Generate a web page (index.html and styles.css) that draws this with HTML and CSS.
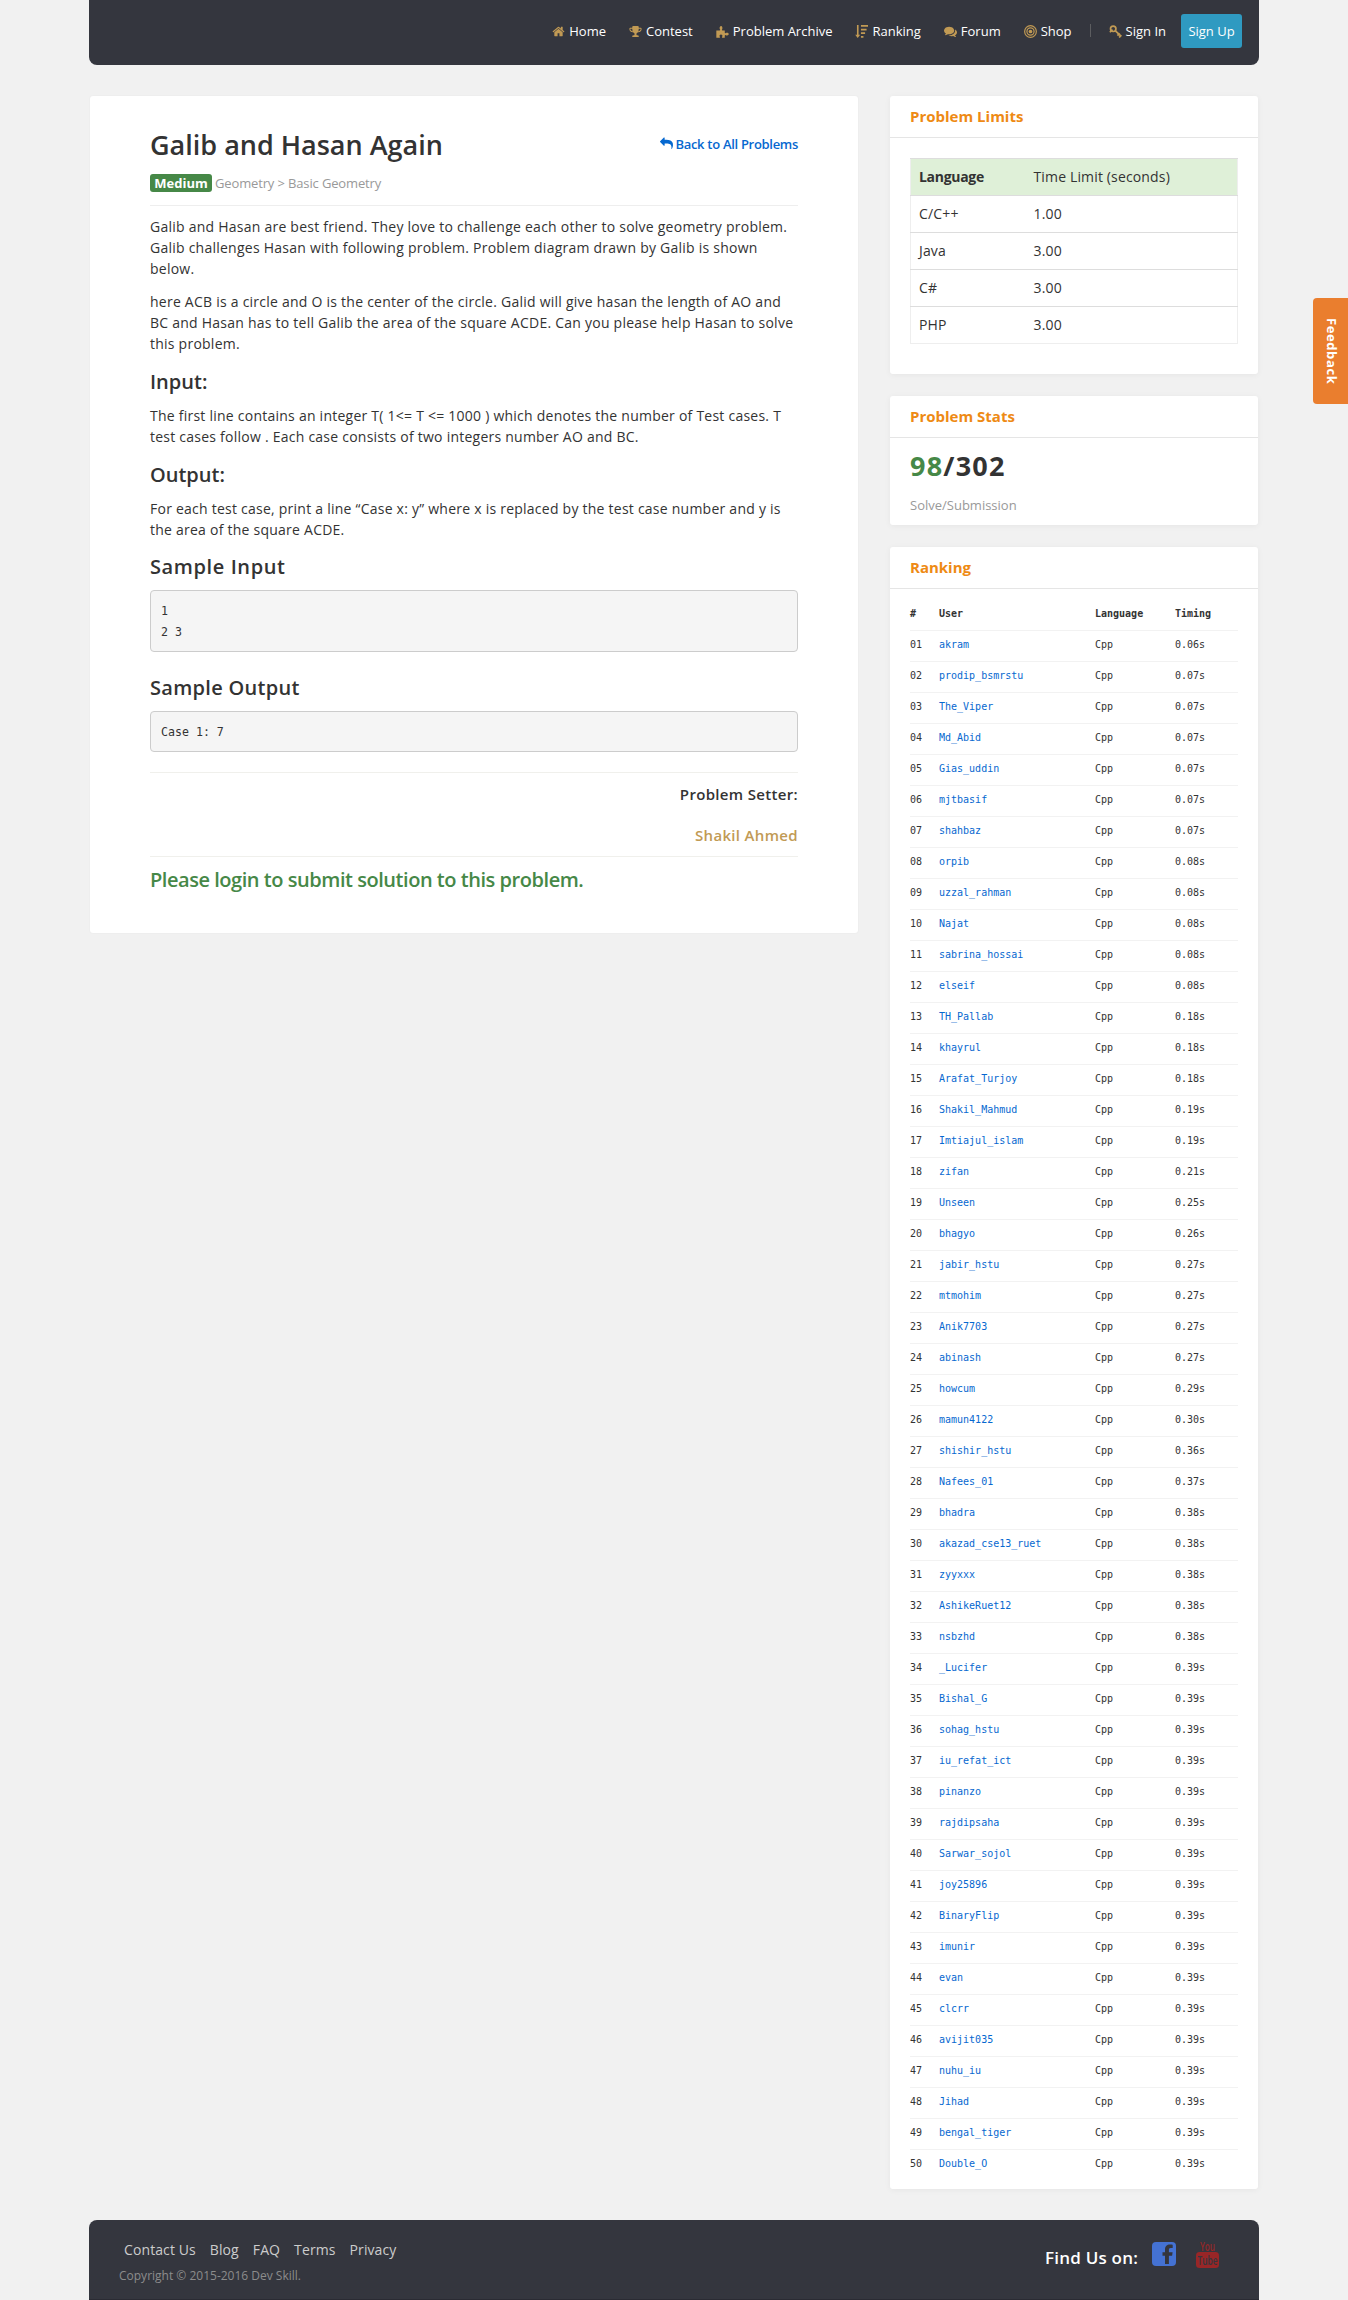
FILE: index.html
```html
<!DOCTYPE html>
<html lang="en">
<head>
<meta charset="utf-8">
<title>Galib and Hasan Again - Dev Skill</title>
<link rel="stylesheet" href="styles.css">
</head>
<body>
<div class="container">
  <header class="topbar">
    <nav class="nav">
      <a class="nav-item"><svg class="icon" viewBox="0 0 1792 1792"><path d="M1472 992v480q0 26-19 45t-45 19h-384v-384h-256v384h-384q-26 0-45-19t-19-45v-480q0-1 .5-3t.5-3l575-474 575 474q1 2 1 6zm223-69l-62 74q-8 9-21 11h-3q-13 0-21-7l-692-577-692 577q-12 8-24 7-13-2-21-11l-62-74q-8-10-7-23.5t11-21.5l719-599q32-26 76-26t76 26l244 204v-195q0-14 9-23t23-9h192q14 0 23 9t9 23v408l219 182q10 8 11 21.5t-7 23.5z"/></svg>Home</a>
      <a class="nav-item"><svg class="icon" viewBox="0 0 1792 1792"><path d="M522 883q-74-162-74-371h-256v96q0 78 94.500 162t235.500 113zm1078-275v-96h-256q0 209-74 371 141-29 235.500-113t94.500-162zm128-128v128q0 71-41.500 143t-112 130-173 97.500-215.500 44.500q-42 54-95 95-38 34-52.500 72.500t-14.500 89.500q0 54 30.500 91t97.500 37q75 0 133.500 45.500t58.500 114.500v64q0 14-9 23t-23 9h-832q-14 0-23-9t-9-23v-64q0-69 58.500-114.500t133.500-45.500q67 0 97.500-37t30.500-91q0-51-14.500-89.500t-52.500-72.500q-53-41-95-95-113-5-215.500-44.500t-173-97.500-112-130-41.500-143v-128q0-40 28-68t68-28h288v-96q0-66 47-113t113-47h576q66 0 113 47t47 113v96h288q40 0 68 28t28 68z"/></svg>Contest</a>
      <a class="nav-item"><svg class="icon" viewBox="0 0 12 12"><path d="M.3 5h3.100c.5 0 .6-.4.300-.8C3 3.300 3.300 1 4.600 1s1.700 2.100 1 3.200c-.3.400-.2.800.4.800h2.100v2c0 .6.400.7.900.400 1.300-.7 2.700-.3 2.700 1s-1.400 1.700-2.700 1c-.5-.3-.9-.1-.9.500v1.800H6c-.5 0-.6-.4-.3-.9.700-1-.1-2-1.100-2s-1.800 1-1.100 2c.3.500.2.900-.3.900H.3z"/></svg>Problem Archive</a>
      <a class="nav-item"><svg class="icon" viewBox="0 0 12 12"><path d="M1.800 0h1.500v9h1.500L2.500 12 .2 9h1.600zM5.500 0H12v1.700H5.500zM5.500 3.400h5.200V5H5.500zM5.500 6.800h3.800v1.600H5.500zM5.500 10.200h2.300v1.600H5.500z"/></svg>Ranking</a>
      <a class="nav-item"><svg class="icon" viewBox="0 0 1792 1792"><path d="M1408 768q0 139-94 257t-256.500 186.500-353.500 68.500q-86 0-176-16-124 88-278 128-36 9-86 16h-3q-11 0-20.500-8t-11.500-21q-1-3-1-6.500t.5-6.500 2-6l2.500-5t3.500-5.500 4-5 4.500-5 4-4.500q5-6 23-25t26-29.500 22.500-29 25-38.500 20.500-44q-124-72-195-177t-71-224q0-139 94-257t256.500-186.500 353.500-68.500 353.500 68.500 256.500 186.500 94 257zm384 256q0 120-71 224.500t-195 176.500q10 24 20.500 44t25 38.500 22.500 29 26 29.500 23 25q1 1 4 4.500t4.500 5 4 5 3.500 5.500l2.500 5t2 6 .5 6.500-1 6.500q-3 14-13 22t-22 7q-50-7-86-16-154-40-278-128-90 16-176 16-271 0-472-132 58 4 88 4 161 0 309-45t264-129q125-92 192-212t67-254q0-77-23-152 129 71 204 178t75 230z"/></svg>Forum</a>
      <a class="nav-item"><svg class="icon" viewBox="0 0 12 12"><g fill="none" stroke="#c19a54" stroke-width="1.100"><circle cx="6" cy="6" r="5.400"/><circle cx="6" cy="6" r="3.300"/></g><circle cx="6" cy="6" r="1.700"/></svg>Shop</a>
      <span class="divider"></span>
      <a class="nav-item"><svg class="icon" viewBox="0 0 12 12"><g fill="none" stroke="#c19a54" stroke-width="1.600"><circle cx="3.900" cy="3.500" r="2.500"/><path d="M.8 6.700l2.500-2.500M5.700 5.300l5.600 5.300M7.800 9.800l2-2.200M9.400 11.500l2-2.200"/></g></svg>Sign In</a>
      <a class="signup">Sign Up</a>
    </nav>
  </header>

  <div class="columns">
    <main class="problem">
      <div class="title-row">
        <h1>Galib and Hasan Again</h1>
        <a class="back"><svg class="reply" viewBox="0 0 1792 1792"><path transform="matrix(-1 0 0 1 1792 0)" d="M1792 640q0 26-19 45l-512 512q-19 19-45 19t-45-19-19-45v-256h-224q-98 0-175.500 6t-154 21.500-133 42.500-105.500 69.500-80 101-48.500 138.500-17.500 181q0 55 5 123 0 6 2.500 23.500t2.500 26.500q0 15-8.500 25t-23.500 10q-16 0-28-17-7-9-13-22t-13.500-30-10.500-24q-127-285-127-451 0-199 53-333 162-403 875-403h224v-256q0-26 19-45t45-19 45 19l512 512q19 19 19 45z"/></svg><span>Back to All Problems</span></a>
      </div>
      <div class="meta"><span class="badge">Medium</span><span class="crumbs">Geometry &gt; Basic Geometry</span></div>
      <p>Galib and Hasan are best friend. They love to challenge each other to solve geometry problem.<br>Galib challenges Hasan with following problem. Problem diagram drawn by Galib is shown<br>below.</p>
      <p>here ACB is a circle and O is the center of the circle. Galid will give hasan the length of AO and<br>BC and Hasan has to tell Galib the area of the square ACDE. Can you please help Hasan to solve<br>this problem.</p>
      <h2>Input:</h2>
      <p>The first line contains an integer T( 1&lt;= T &lt;= 1000 ) which denotes the number of Test cases. T<br>test cases follow . Each case consists of two integers number AO and BC.</p>
      <h2>Output:</h2>
      <p>For each test case, print a line “Case x: y” where x is replaced by the test case number and y is<br>the area of the square ACDE.</p>
      <h2 class="sample">Sample Input</h2>
      <pre>1
2 3</pre>
      <h2 class="sample-out">Sample Output</h2>
      <pre>Case 1: 7</pre>
      <section class="setter">
        <h3>Problem Setter:</h3>
        <h3 class="name">Shakil Ahmed</h3>
      </section>
      <h2 class="login">Please login to submit solution to this problem.</h2>
    </main>

    <aside class="side">
      <section class="card limits">
        <h3 class="card-title">Problem Limits</h3>
        <table>
          <tr><th>Language</th><td>Time Limit (seconds)</td></tr>
          <tr><td>C/C++</td><td>1.00</td></tr>
          <tr><td>Java</td><td>3.00</td></tr>
          <tr><td>C#</td><td>3.00</td></tr>
          <tr><td>PHP</td><td>3.00</td></tr>
        </table>
      </section>
      <section class="card stats">
        <h3 class="card-title">Problem Stats</h3>
        <div class="score"><span>98</span>/302</div>
        <div class="caption">Solve/Submission</div>
      </section>
      <section class="card ranks">
        <h3 class="card-title">Ranking</h3>
        <table>
          <colgroup><col class="c-no"><col class="c-user"><col class="c-lang"><col></colgroup>
          <tr><th>#</th><th>User</th><th>Language</th><th>Timing</th></tr>
          <tr><td>01</td><td><a>akram</a></td><td>Cpp</td><td>0.06s</td></tr>
          <tr><td>02</td><td><a>prodip_bsmrstu</a></td><td>Cpp</td><td>0.07s</td></tr>
          <tr><td>03</td><td><a>The_Viper</a></td><td>Cpp</td><td>0.07s</td></tr>
          <tr><td>04</td><td><a>Md_Abid</a></td><td>Cpp</td><td>0.07s</td></tr>
          <tr><td>05</td><td><a>Gias_uddin</a></td><td>Cpp</td><td>0.07s</td></tr>
          <tr><td>06</td><td><a>mjtbasif</a></td><td>Cpp</td><td>0.07s</td></tr>
          <tr><td>07</td><td><a>shahbaz</a></td><td>Cpp</td><td>0.07s</td></tr>
          <tr><td>08</td><td><a>orpib</a></td><td>Cpp</td><td>0.08s</td></tr>
          <tr><td>09</td><td><a>uzzal_rahman</a></td><td>Cpp</td><td>0.08s</td></tr>
          <tr><td>10</td><td><a>Najat</a></td><td>Cpp</td><td>0.08s</td></tr>
          <tr><td>11</td><td><a>sabrina_hossai</a></td><td>Cpp</td><td>0.08s</td></tr>
          <tr><td>12</td><td><a>elseif</a></td><td>Cpp</td><td>0.08s</td></tr>
          <tr><td>13</td><td><a>TH_Pallab</a></td><td>Cpp</td><td>0.18s</td></tr>
          <tr><td>14</td><td><a>khayrul</a></td><td>Cpp</td><td>0.18s</td></tr>
          <tr><td>15</td><td><a>Arafat_Turjoy</a></td><td>Cpp</td><td>0.18s</td></tr>
          <tr><td>16</td><td><a>Shakil_Mahmud</a></td><td>Cpp</td><td>0.19s</td></tr>
          <tr><td>17</td><td><a>Imtiajul_islam</a></td><td>Cpp</td><td>0.19s</td></tr>
          <tr><td>18</td><td><a>zifan</a></td><td>Cpp</td><td>0.21s</td></tr>
          <tr><td>19</td><td><a>Unseen</a></td><td>Cpp</td><td>0.25s</td></tr>
          <tr><td>20</td><td><a>bhagyo</a></td><td>Cpp</td><td>0.26s</td></tr>
          <tr><td>21</td><td><a>jabir_hstu</a></td><td>Cpp</td><td>0.27s</td></tr>
          <tr><td>22</td><td><a>mtmohim</a></td><td>Cpp</td><td>0.27s</td></tr>
          <tr><td>23</td><td><a>Anik7703</a></td><td>Cpp</td><td>0.27s</td></tr>
          <tr><td>24</td><td><a>abinash</a></td><td>Cpp</td><td>0.27s</td></tr>
          <tr><td>25</td><td><a>howcum</a></td><td>Cpp</td><td>0.29s</td></tr>
          <tr><td>26</td><td><a>mamun4122</a></td><td>Cpp</td><td>0.30s</td></tr>
          <tr><td>27</td><td><a>shishir_hstu</a></td><td>Cpp</td><td>0.36s</td></tr>
          <tr><td>28</td><td><a>Nafees_01</a></td><td>Cpp</td><td>0.37s</td></tr>
          <tr><td>29</td><td><a>bhadra</a></td><td>Cpp</td><td>0.38s</td></tr>
          <tr><td>30</td><td><a>akazad_cse13_ruet</a></td><td>Cpp</td><td>0.38s</td></tr>
          <tr><td>31</td><td><a>zyyxxx</a></td><td>Cpp</td><td>0.38s</td></tr>
          <tr><td>32</td><td><a>AshikeRuet12</a></td><td>Cpp</td><td>0.38s</td></tr>
          <tr><td>33</td><td><a>nsbzhd</a></td><td>Cpp</td><td>0.38s</td></tr>
          <tr><td>34</td><td><a>_Lucifer</a></td><td>Cpp</td><td>0.39s</td></tr>
          <tr><td>35</td><td><a>Bishal_G</a></td><td>Cpp</td><td>0.39s</td></tr>
          <tr><td>36</td><td><a>sohag_hstu</a></td><td>Cpp</td><td>0.39s</td></tr>
          <tr><td>37</td><td><a>iu_refat_ict</a></td><td>Cpp</td><td>0.39s</td></tr>
          <tr><td>38</td><td><a>pinanzo</a></td><td>Cpp</td><td>0.39s</td></tr>
          <tr><td>39</td><td><a>rajdipsaha</a></td><td>Cpp</td><td>0.39s</td></tr>
          <tr><td>40</td><td><a>Sarwar_sojol</a></td><td>Cpp</td><td>0.39s</td></tr>
          <tr><td>41</td><td><a>joy25896</a></td><td>Cpp</td><td>0.39s</td></tr>
          <tr><td>42</td><td><a>BinaryFlip</a></td><td>Cpp</td><td>0.39s</td></tr>
          <tr><td>43</td><td><a>imunir</a></td><td>Cpp</td><td>0.39s</td></tr>
          <tr><td>44</td><td><a>evan</a></td><td>Cpp</td><td>0.39s</td></tr>
          <tr><td>45</td><td><a>clcrr</a></td><td>Cpp</td><td>0.39s</td></tr>
          <tr><td>46</td><td><a>avijit035</a></td><td>Cpp</td><td>0.39s</td></tr>
          <tr><td>47</td><td><a>nuhu_iu</a></td><td>Cpp</td><td>0.39s</td></tr>
          <tr><td>48</td><td><a>Jihad</a></td><td>Cpp</td><td>0.39s</td></tr>
          <tr><td>49</td><td><a>bengal_tiger</a></td><td>Cpp</td><td>0.39s</td></tr>
          <tr><td>50</td><td><a>Double_O</a></td><td>Cpp</td><td>0.39s</td></tr>
        </table>
      </section>
    </aside>
  </div>

  <footer class="footer">
    <div>
      <div class="links"><a>Contact Us</a><a>Blog</a><a>FAQ</a><a>Terms</a><a>Privacy</a></div>
      <div class="copyright">Copyright © 2015-2016 Dev Skill.</div>
    </div>
    <div class="social">
      <span class="find">Find Us on:</span>
      <svg class="facebook" viewBox="0 0 24 24"><rect width="24" height="24" rx="4" fill="#4472d3"/><path fill="#34363e" d="M13 22v-8.200h-2.500v-3.600H13V7.500C13 4 15 2.500 17.800 2.500c1.300 0 2.500.100 2.900.2v3.200h-2c-1.500 0-1.800.8-1.800 1.900v2.400h3.700l-.5 3.600h-3.200V22z"/></svg>
      <svg class="youtube" viewBox="0 0 23 28"><rect y="12" width="23" height="16" rx="3.500" fill="#982627"/><text x="4" y="10.500" textLength="15" lengthAdjust="spacingAndGlyphs" class="yt-you">You</text><text x="1.500" y="25" textLength="20" lengthAdjust="spacingAndGlyphs" class="yt-tube">Tube</text></svg>
    </div>
  </footer>
</div>
<a class="feedback">Feedback</a>
</body>
</html>
```
FILE: styles.css
```css
* { box-sizing: border-box; }
body {
  margin: 0;
  background: #f1f1f1;
  color: #333;
  font: 14px/21px "Open Sans", sans-serif;
}
h1, h2, h3, p, pre { margin: 0; }
.container { width: 1170px; margin: 0 auto; }

.topbar {
  height: 65px;
  padding: 14px 17px 0 0;
  background: #34363e;
  border-radius: 0 0 8px 8px;
}
.nav { display: flex; justify-content: flex-end; align-items: flex-start; }
.nav-item {
  display: flex;
  align-items: center;
  height: 34px;
  margin-right: 23px;
  color: #fff;
  font-size: 13px;
  line-height: 34px;
}
.icon { width: 13px; height: 13px; margin-right: 4px; fill: #c19a54; }
.divider { width: 1px; height: 13px; margin: 10px 18px 0 -5px; background: #5c5d60; }
.divider + .nav-item { margin-right: 15px; }
.signup {
  width: 61px;
  height: 34px;
  background: #2f9ac1;
  border-radius: 3px;
  color: #fff;
  font-size: 13px;
  line-height: 34px;
  text-align: center;
}

.columns { display: flex; justify-content: space-between; align-items: flex-start; padding: 31px 1px; }
.problem {
  width: 768px;
  height: 837px;
  padding: 34px 60px 0;
  background: #fff;
  border-radius: 3px;
  box-shadow: 0 0 2px rgba(0, 0, 0, .05);
}
.title-row { display: flex; justify-content: space-between; }
h1 { font-size: 27px; line-height: 30px; font-weight: 600; }
.back { display: flex; align-items: center; height: 28px; color: #0668d0; font-size: 13px; font-weight: 600; }
.back span { letter-spacing: -.3px; }
.reply { width: 13px; height: 13px; margin: 0 2px 1px 0; fill: #0668d0; }
.meta {
  display: flex;
  gap: 3px;
  height: 46px;
  margin-bottom: 10px;
  padding-top: 14px;
  border-bottom: 1px solid #eee;
  font-size: 13px;
  line-height: 18px;
}
.badge { width: 62px; height: 18px; background: #468847; border-radius: 3px; color: #fff; font-weight: 700; text-align: center; }
.crumbs { color: #999; letter-spacing: -.14px; }
.problem p { margin-bottom: 12px; letter-spacing: .24px; white-space: nowrap; }
h2 { font-size: 20px; line-height: 22px; font-weight: 600; margin: 17px 0 12px; }
pre {
  padding: 10px 10px 8px;
  background: #f5f5f5;
  border: 1px solid #ccc;
  border-radius: 4px;
  font: 11.6px/21px "DejaVu Sans Mono", monospace;
}
h2.sample { margin-top: 16px; letter-spacing: .6px; }
h2.sample-out { margin-top: 25px; letter-spacing: .3px; }
.setter {
  height: 85px;
  margin-top: 20px;
  padding-top: 11px;
  border-top: 1px solid #f0f0ec;
  border-bottom: 1px solid #f0f0ec;
  text-align: right;
}
.setter h3 { font-size: 15px; line-height: 20px; font-weight: 600; letter-spacing: .33px; }
.setter .name { margin-top: 21px; color: #c19a54; }
h2.login { margin-top: 12px; color: #468847; letter-spacing: -.46px; }

.side { display: flex; flex-direction: column; gap: 22px; width: 368px; }
.card { background: #fff; border-radius: 3px; box-shadow: 0 1px 6px rgba(0, 0, 0, .05); }
.card-title {
  height: 42px;
  padding: 0 20px;
  border-bottom: 1px solid #e5e5e5;
  color: #ee8a14;
  font-size: 15px;
  line-height: 40px;
  font-weight: 700;
}
.card table { border-collapse: collapse; table-layout: fixed; width: 328px; margin: 0 20px; }
.card td, .card th { padding: 0 0 2px; text-align: left; }
.limits { height: 278px; }
.limits table { margin-top: 20px; border: 1px solid #eee; letter-spacing: .15px; }
.limits tr { height: 37px; border-top: 1px solid #ddd; }
.limits tr:first-child { background: #dff0d8; }
.limits td, .limits th { padding-left: 8px; }
.limits th { letter-spacing: -.3px; }
.limits tr > :first-child { width: 115px; }
.stats { height: 129px; }
.score { padding: 12px 20px 0; font-size: 27px; line-height: 32px; font-weight: 700; letter-spacing: 1.2px; }
.score span { color: #468847; }
.caption { padding: 13px 20px 0; color: #999; font-size: 13px; line-height: 20px; }
.ranks { height: 1642px; }
.ranks table { margin-top: 10px; font: 10px/14px "DejaVu Sans Mono", monospace; }
.ranks tr { height: 31px; border-bottom: 1px solid #f2f2f2; }
.ranks tr:last-child { border-bottom: 0; }
.ranks th { padding-bottom: 0; }
.ranks a { color: #0668d0; }
.c-no { width: 29px; }
.c-user { width: 156px; }
.c-lang { width: 80px; }

.footer {
  display: flex;
  justify-content: space-between;
  height: 80px;
  padding: 0 40px 0 30px;
  background: #34363e;
  border-bottom: 1px solid #2a2b33;
  border-radius: 8px 8px 0 0;
}
.links { display: flex; gap: 14px; padding: 19px 5px 0; color: #ccc; letter-spacing: .1px; }
.copyright { margin-top: 6px; color: #8c8c8c; font-size: 12px; line-height: 20px; }
.social { display: flex; align-items: flex-start; }
.find { margin: 27px 14px 0 0; color: #fff; font-size: 17px; line-height: 22px; font-weight: 600; letter-spacing: .2px; }
.facebook { width: 24px; height: 24px; margin: 22px 20px 0 0; }
.youtube { width: 23px; height: 28px; margin-top: 20px; overflow: visible; }
.youtube text { font-family: "Open Sans", sans-serif; font-weight: 600; }
.yt-you { fill: #982627; font-size: 13px; }
.yt-tube { fill: #34363e; font-size: 13px; }

.feedback {
  position: absolute;
  top: 298px;
  right: 0;
  width: 35px;
  height: 106px;
  background: #ea7e2e;
  border-radius: 4px 0 0 4px;
  color: #fff;
  font-size: 13px;
  font-weight: 700;
  letter-spacing: .6px;
  line-height: 32px;
  text-align: center;
  writing-mode: vertical-rl;
}
```
